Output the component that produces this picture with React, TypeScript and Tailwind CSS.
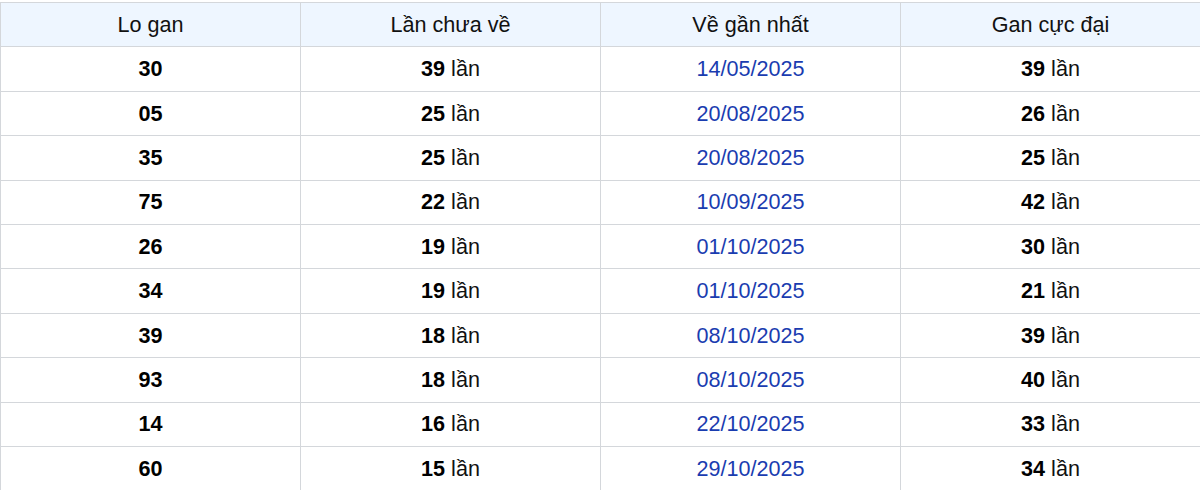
import React from "react";

type Row = {
  lo: string;
  chuaVe: number;
  ganNhat: string;
  cucDai: number;
};

const rows: Row[] = [
  { lo: "30", chuaVe: 39, ganNhat: "14/05/2025", cucDai: 39 },
  { lo: "05", chuaVe: 25, ganNhat: "20/08/2025", cucDai: 26 },
  { lo: "35", chuaVe: 25, ganNhat: "20/08/2025", cucDai: 25 },
  { lo: "75", chuaVe: 22, ganNhat: "10/09/2025", cucDai: 42 },
  { lo: "26", chuaVe: 19, ganNhat: "01/10/2025", cucDai: 30 },
  { lo: "34", chuaVe: 19, ganNhat: "01/10/2025", cucDai: 21 },
  { lo: "39", chuaVe: 18, ganNhat: "08/10/2025", cucDai: 39 },
  { lo: "93", chuaVe: 18, ganNhat: "08/10/2025", cucDai: 40 },
  { lo: "14", chuaVe: 16, ganNhat: "22/10/2025", cucDai: 33 },
  { lo: "60", chuaVe: 15, ganNhat: "29/10/2025", cucDai: 34 },
];

const cell = "border border-[#d4d7db] text-center align-middle p-0";

function Lan({ n }: { n: number }) {
  return (
    <>
      <b className="font-bold text-black">{n}</b>{" "}
      <span className="text-[#111]">lần</span>
    </>
  );
}

export default function App() {
  return (
    <div className="w-[1200px] h-[490px] overflow-hidden bg-white pt-[2px] font-['Liberation_Sans',Arial,sans-serif]">
      <table className="w-[1201px] border-collapse table-fixed text-[21.6px] leading-none">
        <thead>
          <tr className="h-[44.4px] bg-[#eef6ff] text-[#111]">
            <th className={`${cell} font-normal`}>Lo gan</th>
            <th className={`${cell} font-normal`}>Lần chưa về</th>
            <th className={`${cell} font-normal`}>Về gần nhất</th>
            <th className={`${cell} font-normal`}>Gan cực đại</th>
          </tr>
        </thead>
        <tbody>
          {rows.map((r, i) => (
            <tr key={i} className="h-[44.4px]">
              <td className={`${cell} font-bold text-black`}>{r.lo}</td>
              <td className={cell}>
                <Lan n={r.chuaVe} />
              </td>
              <td className={`${cell} text-[#1a3cb0]`}>{r.ganNhat}</td>
              <td className={cell}>
                <Lan n={r.cucDai} />
              </td>
            </tr>
          ))}
        </tbody>
      </table>
    </div>
  );
}
